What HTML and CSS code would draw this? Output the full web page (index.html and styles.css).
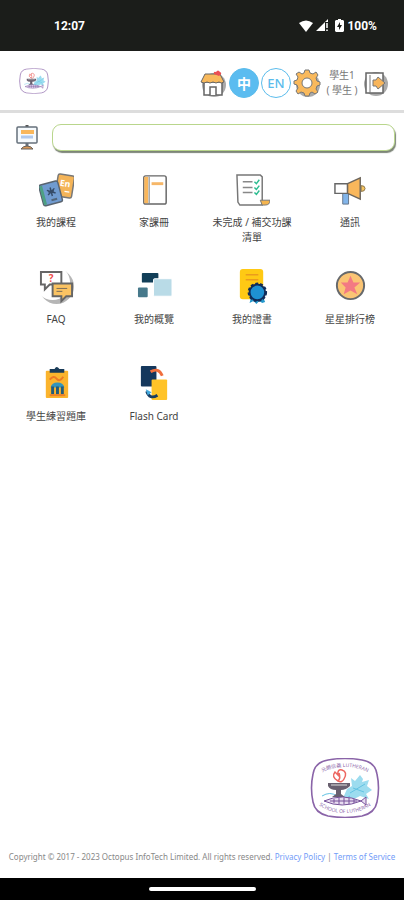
FILE: index.html
```
<!DOCTYPE html>
<html lang="zh-Hant">
<head>
<meta charset="utf-8">
<meta name="viewport" content="width=device-width, initial-scale=1">
<title>學生</title>
<link rel="stylesheet" href="styles.css">
</head>
<body>
<svg class="defs" aria-hidden="true">
  <symbol id="crest" viewBox="0 0 70 60">
    <path d="M18 2Q35-1 52 2Q65 4 67 16Q70 30 67 44Q65 55 52 58Q35 61 18 58Q5 55 3 44Q0 30 3 16Q5 4 18 2Z" fill="#fff" stroke="#8a64a8" stroke-width="1.6"/>
    <path d="M33 40L37 31L42 28L41 20L45 23L50 17L53 21L52 24L59 22L57 28L62 32L56 36L59 41L50 38L44 41Z" fill="#9cdcef"/>
    <path d="M12 38Q20 33 27 38T40 38M40 35L55 26M43 30L54 34" fill="none" stroke="#63c3e3"/>
    <path d="M28 23Q21 19 25 14L28 17Q27 11 32 12Q38 14 34 21Q32 25 28 23Q31 20 29 15" fill="none" stroke="#ed6660" stroke-width="1.5"/>
    <path d="M18 25H40V28Q36 32 31 32V36L35 39H22L26 36V32Q20 32 18 28Z" fill="#68606f"/>
    <path d="M21 27H37" stroke="#ddd"/>
    <path d="M14 43Q32 35 51 43L56 39V47L51 43Q32 51 14 43Z" fill="#e8dcf0" stroke="#76519a"/>
    <path d="M20 43H47M24 41V45M29 40V46M34 40V46M39 40V46M44 41V45" stroke="#76519a" fill="none"/>
  </symbol>
</svg>

<div class="status">
  <span>12:07</span>
  <div class="status-right">
    <svg class="wifi" viewBox="0 0 14 12"><path d="M0 3Q7-2 14 3L7 12Z" fill="#fff"/></svg>
    <svg class="signal" viewBox="0 0 13 13"><path d="M0 12L12 0V3H9V12Z" fill="#fff"/><path d="M11 4V9M11 10.500V12" stroke="#fff" stroke-width="1.500"/></svg>
    <svg class="battery" viewBox="0 0 9 13"><path d="M3 0H6V1H8L9 2V12L8 13H1L0 12V2L1 1H3Z" fill="#fff"/><path d="M5 3L2 8H4V11L7 6H5Z" fill="#1b1d1a"/></svg>
    <span>100%</span>
  </div>
</div>

<header class="header">
  <a href="#" class="brand" aria-label="首頁"><svg viewBox="0 0 70 60"><use href="#crest"/></svg></a>
  <nav class="tools">
    <button class="tool" aria-label="主頁">
      <svg viewBox="0 0 28 30"><circle cx="15" cy="17" r="12" fill="#aaa"/><path d="M5 14H23V27H5Z" fill="#fff" stroke="#666" stroke-width="1.500"/><path d="M11 27V19H17V27" fill="#fff" stroke="#666" stroke-width="1.500"/><path d="M6 6H21L25 14Q22 16 20 14Q17 16 14 14Q11 16 8 14Q5 16 2 14Z" fill="#f8b95c" stroke="#666"/><path d="M15 6Q14 3 17 4Q19 1 21 4Q24 5 20 8Z" fill="#eb4f53"/></svg>
    </button>
    <button class="lang lang-active">中</button>
    <button class="lang">EN</button>
    <button class="tool" aria-label="設定">
      <svg viewBox="0 0 28 30"><circle cx="15" cy="17" r="12" fill="#aaa"/><path d="M11 5L12 2H16L17 5L20 6L23 4L25 7L23 10L24 13L27 14V17L24 18L23 21L25 24L22 26L19 24L17 25L16 28H12L11 25L8 24L5 26L3 23L5 20L4 17L1 16V13L4 12L5 9L3 6L6 4L9 6Z" fill="#f9b95c" stroke="#777"/><circle cx="14" cy="15" r="5" fill="#fff" stroke="#777"/></svg>
    </button>
    <div class="user"><span>學生1</span><span>( 學生 )</span></div>
    <button class="tool tool-exit" aria-label="登出">
      <svg viewBox="0 0 26 30"><circle cx="13" cy="16" r="12" fill="#aaa"/><path d="M3 5H20V25H3Z" fill="#fff" stroke="#666" stroke-width="1.500"/><path d="M7 7V25" stroke="#777"/><path d="M10 12L13 12L15 9L22 15L15 21L13 18L10 18Z" fill="#f8b55a" stroke="#777"/></svg>
    </button>
  </nav>
</header>

<main class="main">
  <div class="notice">
    <svg class="board" viewBox="0 0 24 26"><path d="M12 0V3" stroke="#555" stroke-width="3"/><path d="M12 18V23" stroke="#68717c" stroke-width="3"/><rect x="2" y="2" width="20" height="16" rx="1" fill="#f6fafd" stroke="#65707b" stroke-width="1.500"/><path d="M6 7H19" stroke="#f9b75c" stroke-width="4"/><path d="M6 12H18" stroke="#b0c9ed" stroke-width="3"/><path d="M6 24Q8 21 12 21T18 24Z" fill="#d99858" stroke="#66605a"/></svg>
    <input class="notice-box" type="text" aria-label="通告">
  </div>

  <nav class="menu">
    <a href="#" class="item">
      <svg viewBox="0 0 36 36"><g transform="rotate(9 27 15)"><rect x="18" y="3" width="17" height="23" rx="2" fill="#f4b458" stroke="#777" stroke-width="1.500"/><text x="21" y="15" class="book-text">En</text><path d="M27 20H32" stroke="#fff" stroke-width="1.500"/></g><g transform="rotate(-15 12 22)"><rect x="2" y="11" width="20" height="22" rx="2" fill="#709bd0" stroke="#596470" stroke-width="1.500"/><path d="M4 12V32" stroke="#4da083" stroke-width="3"/><path d="M9 18L17 23M9 23L17 18M13 16V25M10 20H16" stroke="#354b68" stroke-width="1.500"/><path d="M11 29H17" stroke="#51657a" stroke-width="2"/></g></svg>
      <span>我的課程</span>
    </a>
    <a href="#" class="item">
      <svg viewBox="0 0 36 36"><rect x="7" y="4" width="23" height="29" rx="2" fill="#fff" stroke="#666" stroke-width="1.500"/><path d="M9.500 5V32" stroke="#f9b75c" stroke-width="4"/><path d="M12.500 5V32" stroke="#777"/><path d="M15 12H27" stroke="#f6b768" stroke-width="3"/></svg>
      <span>家課冊</span>
    </a>
    <a href="#" class="item">
      <svg viewBox="0 0 36 36"><path d="M2 3H26L28 5V34H5L3 31Z" fill="#fff" stroke="#777" stroke-width="1.500"/><path d="M26 29H36Q36 34 31 34H28Z" fill="#f4b44e" stroke="#777"/><path d="M8 10H18M8 16H18M8 21H18" stroke="#888" stroke-width="1.500"/><path d="M20 10L22 12L25 8M20 16L22 18L25 14M20 21L22 23L25 19" fill="none" stroke="#2dbd91" stroke-width="1.500"/></svg>
      <span>未完成 / 補交功課清單</span>
    </a>
    <a href="#" class="item">
      <svg viewBox="0 0 36 36"><path d="M10 22H16V33H10Z" fill="#82b5ea" stroke="#66788b"/><path d="M2 12H15V22H2Z" fill="#fff" stroke="#666" stroke-width="1.500"/><path d="M15 12L28 6V28L15 22Z" fill="#f9b75b" stroke="#6d665d" stroke-width="1.500"/><path d="M29 14Q33 14 33 17T29 20Z" fill="#f7c55e" stroke="#887551"/></svg>
      <span>通訊</span>
    </a>
    <a href="#" class="item">
      <svg viewBox="0 0 36 36"><circle cx="18" cy="18" r="18" fill="#b6b6b6"/><circle cx="14" cy="14" r="18" fill="#fff"/><path d="M2 3H23V16H11L6 21V16H2Z" fill="#fff" stroke="#666" stroke-width="2"/><path d="M14 15H34V28H28L23 33V28H14Z" fill="#fac363" stroke="#666" stroke-width="2"/><text x="10" y="13" class="question">?</text><path d="M18 20H29M18 23H24" stroke="#786b59"/></svg>
      <span>FAQ</span>
    </a>
    <a href="#" class="item">
      <svg viewBox="0 0 36 36"><rect x="5" y="4" width="17" height="10" rx="1" fill="#123f58"/><rect x="17" y="10" width="19" height="18" rx="1" fill="#b9dbe7" stroke="#fff"/><rect x="1" y="19" width="10" height="10" rx="1" fill="#47798b"/></svg>
      <span>我的概覽</span>
    </a>
    <a href="#" class="item">
      <svg viewBox="0 0 36 36"><rect x="5" y="0" width="24" height="31" rx="3" fill="#ffc914"/><path d="M11 6H24M11 11H24" stroke="#eb9c1d" stroke-width="1.500"/><path d="M17 27L15 35L19 33L22 36L25 33L28 35L31 34L28 27Z" fill="#2598cc"/><circle cx="23" cy="24" r="8" fill="#1e91d2" stroke="#102c59" stroke-width="2"/><circle cx="23" cy="24" r="9" fill="none" stroke="#102c59" stroke-width="2" stroke-dasharray="3 2"/></svg>
      <span>我的證書</span>
    </a>
    <a href="#" class="item">
      <svg viewBox="0 0 36 36"><circle cx="18" cy="17" r="14" fill="#fac474" stroke="#66696c" stroke-width="2"/><path d="M18 7L21 14L28 14L22 19L25 26L18 22L11 26L13 19L8 14L15 14Z" fill="#f37983"/></svg>
      <span>星星排行榜</span>
    </a>
    <a href="#" class="item">
      <svg viewBox="0 0 36 36"><rect x="7" y="5" width="23" height="28" rx="1" fill="#fbb42d"/><path d="M11 3H16Q18-1 21 3H26V7H11Z" fill="#193b58"/><path d="M11 14Q15 9 18 13T25 11" fill="none" stroke="#ed7925" stroke-width="2"/><path d="M12 22Q13 17 19 17T26 22Z" fill="#3295bd"/><path d="M14 21V29M19 21V29M24 21V29" stroke="#235b7a" stroke-width="3"/><path d="M11 30H27" stroke="#ee7f27" stroke-width="2"/></svg>
      <span>學生練習題庫</span>
    </a>
    <a href="#" class="item">
      <svg viewBox="0 0 36 36"><rect x="4" y="0" width="16" height="21" rx="1" fill="#14375c"/><rect x="15" y="14" width="16" height="21" rx="1" fill="#ffc328"/><path d="M14 6Q22 1 26 10" fill="none" stroke="#f06e3c" stroke-width="3"/><path d="M10 26Q13 35 21 30" fill="none" stroke="#183d62" stroke-width="3"/><path d="M9 24L15 27L11 30Z" fill="#42a9dd"/></svg>
      <span>Flash Card</span>
    </a>
  </nav>

  <svg class="seal" viewBox="0 0 70 60" role="img" aria-label="校徽"><use href="#crest"/><path id="top-arc" d="M7 18Q18 9 35 9Q52 9 63 18" fill="none"/><path id="bottom-arc" d="M6 45Q18 55 35 55Q52 55 64 45" fill="none"/><text class="seal-text"><textPath href="#top-arc" startOffset="50%">元朗信義 LUTHERAN</textPath></text><text class="seal-text"><textPath href="#bottom-arc" startOffset="50%">SCHOOL OF LUTHERAN</textPath></text></svg>
</main>

<footer class="footer">Copyright © 2017 - 2023 Octopus InfoTech Limited. All rights reserved. <a href="#">Privacy Policy</a> | <a href="#">Terms of Service</a></footer>
<div class="gesture"><div class="pill"></div></div>
</body>
</html>
```

FILE: styles.css
```
* {
  box-sizing: border-box;
}

body {
  margin: 0;
  min-height: 100vh;
  display: flex;
  flex-direction: column;
  background: #fff;
  color: #444;
  font: 10px/15px "Noto Sans", "Noto Sans CJK TC", sans-serif;
}

svg {
  display: block;
  flex: none;
}

a {
  text-decoration: none;
}

button {
  padding: 0;
  border: 0;
  background: none;
  font: inherit;
}

.defs {
  position: absolute;
  width: 0;
  height: 0;
}

.status {
  display: flex;
  align-items: center;
  justify-content: space-between;
  height: 51px;
  padding: 0 27px 0 54px;
  background: #1b1d1a;
  color: #fff;
  font: 700 12px/16px Roboto, sans-serif;
}

.status-right {
  display: flex;
  align-items: center;
  gap: 3px;
}

.wifi {
  width: 14px;
  height: 12px;
}

.signal {
  width: 13px;
  height: 13px;
}

.battery {
  width: 9px;
  height: 13px;
  margin-left: 3px;
}

.header {
  display: flex;
  align-items: center;
  justify-content: space-between;
  height: 62px;
  padding: 5px 15px 0 19px;
  border-bottom: 3px solid #ddd;
}

.brand {
  margin-bottom: 4px;
}

.brand svg {
  width: 30px;
  height: 26px;
}

.tools {
  display: flex;
  align-items: center;
  gap: 2px;
}

.tool,
.tool svg {
  width: 28px;
  height: 30px;
}

.tool-exit,
.tool-exit svg {
  width: 26px;
}

.lang {
  width: 30px;
  height: 30px;
  border: 1px solid #5bbcec;
  border-radius: 50%;
  background: #fff;
  color: #5bbcec;
  font-size: 13px;
  font-weight: 500;
}

.lang-active {
  background: #5bbcf0;
  color: #fff;
  font-size: 14px;
  font-weight: 700;
}

.user {
  display: flex;
  flex-direction: column;
  width: 38px;
  color: #777;
  text-align: center;
  white-space: nowrap;
}

.main {
  flex: 1;
  display: flex;
  flex-direction: column;
}

.notice {
  display: flex;
  align-items: center;
  gap: 13px;
  padding: 11px 9px 0 15px;
}

.board {
  width: 24px;
  height: 26px;
}

.notice-box {
  flex: 1;
  min-width: 0;
  height: 27px;
  padding: 0 10px;
  border: 1px solid #b9d68c;
  border-radius: 9px;
  background: #fff;
  box-shadow: 1px 2px 1px #7d8578;
  font: inherit;
}

.menu {
  display: grid;
  grid-template-columns: repeat(4, 1fr);
  grid-auto-rows: minmax(73px, auto);
  row-gap: 24px;
  padding: 21px 5px 0 7px;
}

.item {
  display: flex;
  flex-direction: column;
  align-items: center;
  gap: 8px;
  padding: 0 8px;
  color: #444;
  text-align: center;
}

.item svg {
  width: 35px;
  height: 35px;
}

.book-text {
  fill: #fff;
  font-size: 9px;
  font-weight: 700;
}

.question {
  fill: #ee4b4b;
  font-size: 10px;
  font-weight: 700;
}

.seal {
  width: 70px;
  height: 60px;
  margin: auto 24px 31px auto;
}

.seal-text {
  fill: #8a64a8;
  font-size: 5px;
  text-anchor: middle;
}

.footer {
  padding: 0 4px 14px;
  color: #888;
  font-size: 8px;
  text-align: center;
  white-space: nowrap;
}

.footer a {
  color: #729cf8;
}

.gesture {
  display: flex;
  align-items: center;
  justify-content: center;
  height: 22px;
  background: #000;
}

.pill {
  width: 107px;
  height: 4px;
  border-radius: 2px;
  background: #fff;
}
```
